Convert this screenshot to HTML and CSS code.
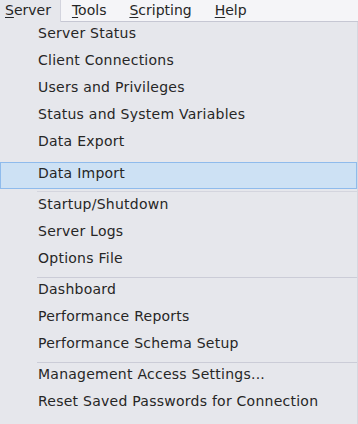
FILE: index.html
```html
<!DOCTYPE html>
<html lang="en">
<head>
    <meta charset="UTF-8">
    <meta name="viewport" content="width=device-width, initial-scale=1.0">
    <title>Server menu</title>
    <link rel="stylesheet" href="styles.css">
</head>
<body>
    <div class="menubar">
        <div class="menubar-item active"><u>S</u>erver</div>
        <div class="menubar-item"><u>T</u>ools</div>
        <div class="menubar-item"><u>S</u>cripting</div>
        <div class="menubar-item"><u>H</u>elp</div>
        <div class="menubar-rest"></div>
    </div>

    <div class="dropdown">
        <div class="menu-item">Server Status</div>
        <div class="menu-item">Client Connections</div>
        <div class="menu-item">Users and Privileges</div>
        <div class="menu-item">Status and System Variables</div>
        <div class="menu-item">Data Export</div>
        <div class="gap"></div>
        <div class="menu-item selected">Data Import</div>
        <div class="separator first"></div>
        <div class="menu-item">Startup/Shutdown</div>
        <div class="menu-item">Server Logs</div>
        <div class="menu-item">Options File</div>
        <div class="separator"></div>
        <div class="menu-item">Dashboard</div>
        <div class="menu-item">Performance Reports</div>
        <div class="menu-item">Performance Schema Setup</div>
        <div class="separator"></div>
        <div class="menu-item">Management Access Settings...</div>
        <div class="menu-item">Reset Saved Passwords for Connection</div>
    </div>
</body>
</html>
```

FILE: styles.css
```css
body, html {
    margin: 0;
    width: 358px;
    height: 424px;
    overflow: hidden;
    background-color: #e6e7ec;
    font-family: "DejaVu Sans", Verdana, sans-serif;
    font-size: 14px;
    color: #262626;
}

.menubar {
    display: flex;
    height: 22px;
    background-color: #f5f5f8;
}

.menubar-item {
    height: 21px;
    line-height: 20px;
    padding: 0 12px 0 11px;
    border-bottom: 1px solid #c6c7d3;
    white-space: nowrap;
}

.menubar-item u {
    text-underline-offset: 2px;
}

.menubar-item.active {
    height: 22px;
    padding: 0 9px 0 5px;
    border-bottom: none;
    border-right: 1px solid #d3d4de;
    background-color: #e6e7ec;
}

.menubar-rest {
    flex: 1;
    border-bottom: 1px solid #c6c7d3;
}

.dropdown {
    display: flex;
    flex-direction: column;
    height: 402px;
    border-right: 1px solid #d6d7df;
}

.menu-item {
    height: 22px;
    line-height: 22px;
    padding: 0 0 5px 38px;
    letter-spacing: 0.25px;
    white-space: nowrap;
}

.menu-item.selected {
    box-sizing: border-box;
    height: 27px;
    line-height: 20px;
    padding: 0 0 5px 37px;
    background-color: #cde1f4;
    border: 1px solid #8fbbec;
}

.gap {
    height: 5px;
}

.separator {
    height: 4px;
    position: relative;
}

.separator::after {
    content: '';
    position: absolute;
    left: 37px;
    right: 0;
    top: 3px;
    height: 1px;
    background: #cbccd7;
}

.separator.first::after {
    top: 2px;
    background: #d4d5de;
}
```
